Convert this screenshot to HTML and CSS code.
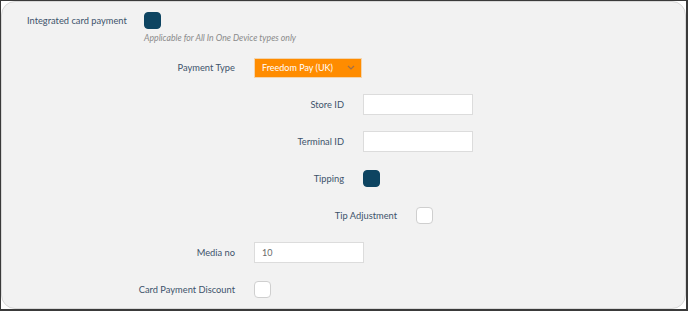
FILE: index.html
```html
<!DOCTYPE html>
<html lang="en">
<head>
    <meta charset="UTF-8">
    <meta name="viewport" content="width=device-width, initial-scale=1.0">
    <title>Card payment settings</title>
    <link rel="stylesheet" href="styles.css">
</head>
<body>
    <div class="frame">
        <div class="card">
            <div class="row lvl0">
                <label class="label">Integrated card payment</label>
                <span class="check checked"></span>
            </div>
            <div class="hint">Applicable for All In One Device types only</div>

            <div class="row lvl1 first">
                <label class="label">Payment Type</label>
                <div class="select">
                    <span>Freedom Pay (UK)</span>
                    <svg width="8" height="5" viewBox="0 0 8 5"><path d="M1 1 L4 4 L7 1" fill="none" stroke="#a0704a" stroke-width="1.2"/></svg>
                </div>
            </div>

            <div class="row lvl2">
                <label class="label">Store ID</label>
                <input class="field" type="text">
            </div>

            <div class="row lvl2">
                <label class="label">Terminal ID</label>
                <input class="field" type="text">
            </div>

            <div class="row lvl2">
                <label class="label">Tipping</label>
                <span class="check checked"></span>
            </div>

            <div class="row lvl3">
                <label class="label">Tip Adjustment</label>
                <span class="check"></span>
            </div>

            <div class="row lvl1">
                <label class="label">Media no</label>
                <input class="field" type="text" value="10">
            </div>

            <div class="row lvl1">
                <label class="label">Card Payment Discount</label>
                <span class="check"></span>
            </div>
        </div>
    </div>
</body>
</html>
```

FILE: styles.css
```css
html, body {
    margin: 0;
    padding: 0;
}

body {
    font-family: 'Lato', 'Liberation Sans', sans-serif;
    background-color: #ffffff;
}

.frame {
    width: 688px;
    height: 311px;
    box-sizing: border-box;
    border-top: 1px solid #3a3a3a;
    border-left: 1px solid #3a3a3a;
    border-right: 2px solid #3a3a3a;
    border-bottom: 2px solid #3a3a3a;
    background-color: #ffffff;
}

.card {
    height: 100%;
    box-sizing: border-box;
    background-color: #f2f2f2;
    border: 1px solid #d8d8d8;
    border-radius: 14px;
    padding-top: 8px;
}

.row {
    display: flex;
    align-items: center;
    height: 21px;
    gap: 19px;
    margin-bottom: 16px;
}

.row.first {
    margin-top: 13px;
}

.label {
    width: 100px;
    flex-shrink: 0;
    text-align: right;
    font-size: 9.3px;
    color: #3d536b;
    white-space: nowrap;
}

.lvl0 { padding-left: 25px; margin-bottom: 0; }
.lvl0 .label { width: 98px; text-align: left; }
.lvl1 { padding-left: 133px; }
.lvl2 { padding-left: 242px; }
.lvl3 { padding-left: 295px; }

.hint {
    padding-left: 142px;
    margin-top: 1px;
    font-size: 8.7px;
    line-height: 12px;
    font-style: italic;
    color: #8a8a8a;
}

.check {
    width: 17px;
    height: 17px;
    box-sizing: border-box;
    border-radius: 4px;
    border: 1px solid #cfcfcf;
    background-color: #ffffff;
}

.check.checked {
    background-color: #0d4461;
    border-color: #0d4461;
}

.select {
    width: 108px;
    height: 20px;
    box-sizing: border-box;
    background-color: #ff8c00;
    border: 1px solid #f3d4ad;
    display: flex;
    align-items: center;
    justify-content: space-between;
    padding: 0 6px 0 7px;
    font-size: 9px;
    color: #ffffff;
}

.field {
    width: 110px;
    height: 21px;
    box-sizing: border-box;
    border: 1px solid #dcdcdc;
    background-color: #ffffff;
    padding: 0 7px;
    font-family: inherit;
    font-size: 9px;
    color: #6a6a6a;
    outline: none;
}
```
